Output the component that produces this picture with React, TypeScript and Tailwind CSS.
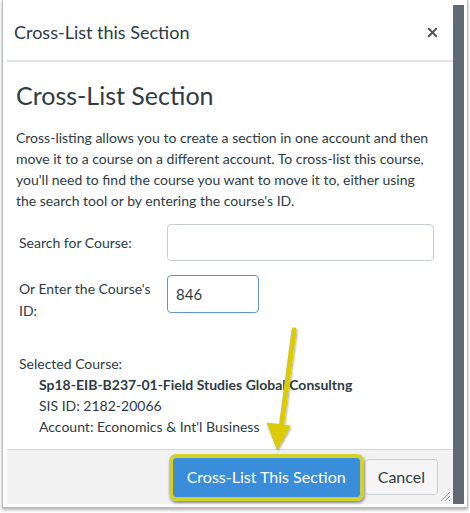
import { X } from 'lucide-react'

function Arrow() {
  return (
    <svg
      className="pointer-events-none absolute left-0 top-0"
      width={470}
      height={513}
      viewBox="0 0 470 513"
    >
      <defs>
        <filter id="sh" x="-20%" y="-20%" width="140%" height="140%">
          <feDropShadow dx="1" dy="1.5" stdDeviation="1.2" floodColor="#000" floodOpacity="0.35" />
        </filter>
      </defs>
      <g filter="url(#sh)" fill="#dccb06" stroke="#dccb06">
        <line x1={294} y1={330} x2={281} y2={428} strokeWidth={5} strokeLinecap="round" />
        <polygon points="267,423 290,426 277,449" strokeWidth={1} strokeLinejoin="round" />
      </g>
    </svg>
  )
}

export default function App() {
  return (
    <div
      className="relative w-[470px] h-[513px] bg-white text-[#2d3b45]"
      style={{ fontFamily: 'Lato, "Open Sans", sans-serif' }}
    >
      <div className="ml-[2px] w-[466px] h-[508px] border-x border-b border-[#b9bcbf] shadow-[0_2px_3px_rgba(0,0,0,0.3)] pl-[4px] pt-[5px] pr-[3px] pb-[3px] flex">
        <div className="flex-1 flex flex-col">
          <div className="h-[57px] flex items-center justify-between pl-[7px] pr-[13px] border-b-2 border-[#e0e4e7]">
            <span className="text-[18px]">Cross-List this Section</span>
            <X size={15} strokeWidth={3} className="text-[#555]" />
          </div>
          <div className="flex-1 pl-[9px] pr-[16px]">
            <h1 className="text-[25px] leading-[34px] mt-[16px]">Cross-List Section</h1>
            <p className="text-[14px] leading-[21px] mt-[15px]">
              Cross-listing allows you to create a section in one account and then move it to a course on a different account. To cross-list this course, you'll need to find the course you want to move it to, either using the search tool or by entering the course's ID.
            </p>
            <div className="mt-[13px] flex items-center">
              <label className="w-[151px] pl-[3px] text-[14px]">Search for Course:</label>
              <div className="w-[267px] h-[37px] border border-[#c7cdd1] rounded-[4px]" />
            </div>
            <div className="mt-[14px] flex items-start">
              <label className="w-[151px] pl-[3px] text-[14px] leading-[22px] pt-[3px]">
                Or Enter the Course's ID:
              </label>
              <div className="w-[92px] h-[38px] border border-[#5d93d0] rounded-[4px] flex items-center px-[8px] text-[15px]">
                846
              </div>
            </div>
            <div className="mt-[31px] pl-[3px] text-[14px] leading-[21px]">
              <div>Selected Course:</div>
              <div className="pl-[20px]">
                <div className="font-bold">Sp18-EIB-B237-01-Field Studies Global Consultng</div>
                <div>SIS ID: 2182-20066</div>
                <div>Account: Economics &amp; Int'l Business</div>
              </div>
            </div>
          </div>
          <div className="relative h-[55px] bg-[#f2f2f2] border-t border-[#d4d8db] flex items-center justify-end pr-[15px] gap-[1px]">
            <div className="rounded-[7px] border-4 border-[#d2d02a] shadow-[1px_2px_3px_rgba(0,0,0,0.45)]">
              <div className="h-[39px] px-[14px] bg-[#3a8dd9] rounded-[3px] flex items-center text-white text-[16px]">
                Cross-List This Section
              </div>
            </div>
            <div className="h-[36px] px-[12px] bg-[#f5f5f5] border border-[#c7cdd1] rounded-[4px] flex items-center text-[16px]">
              Cancel
            </div>
            <svg className="absolute right-[2px] bottom-[2px]" width={11} height={11} viewBox="0 0 11 11">
              <line x1={1} y1={10} x2={10} y2={1} stroke="#999" strokeWidth={1} />
              <line x1={5} y1={10} x2={10} y2={5} stroke="#999" strokeWidth={1} />
              <line x1={9} y1={10} x2={10} y2={9} stroke="#999" strokeWidth={1} />
            </svg>
          </div>
        </div>
        <div className="w-[11px] bg-[#5f6a72]" />
      </div>
      <Arrow />
    </div>
  )
}
